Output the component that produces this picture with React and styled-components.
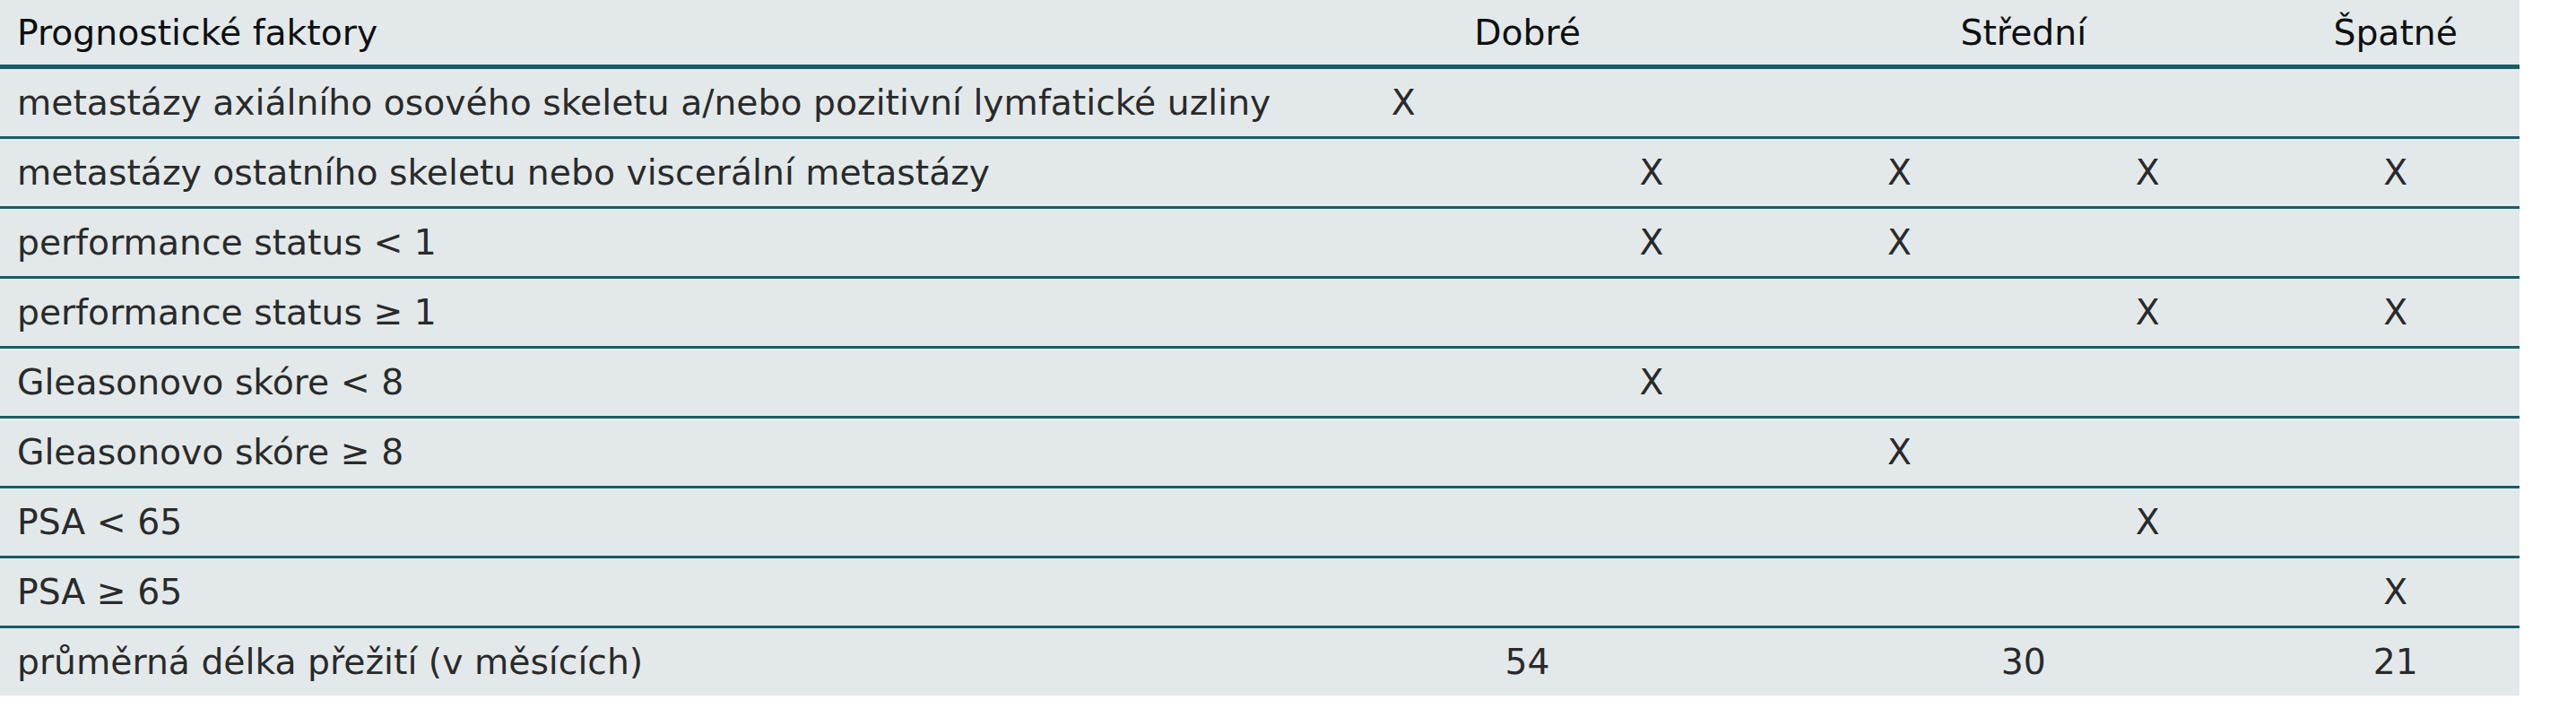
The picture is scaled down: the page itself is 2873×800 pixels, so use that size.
import React from 'react';
import styled, { createGlobalStyle } from 'styled-components';

const GlobalStyle = createGlobalStyle`
  body {
    margin: 0;
    background: #ffffff;
  }
`;

const Table = styled.div`
  width: 2810px;
  background: #e3e9eb;
  font-family: "DejaVu Sans", "Liberation Sans", sans-serif;
  font-size: 39.3px;
  color: #2a2a2a;
`;

const Row = styled.div`
  display: grid;
  grid-template-columns: 1427px repeat(5, 1fr);
  align-items: center;
  height: ${(p) => (p.head ? '72px' : '75px')};
  border-bottom: ${(p) => (p.last ? 'none' : p.head ? '5px solid #1b5b64' : '3px solid #1f5a62')};
  box-shadow: ${(p) => (p.head ? 'none' : 'inset 0 2px 0 #d2f1f5')};
`;

const Cell = styled.div`
  grid-column: span ${(p) => p.span || 1};
  text-align: ${(p) => (p.label ? 'left' : 'center')};
  padding-left: ${(p) => (p.label ? '19px' : '0')};
  white-space: nowrap;
  color: ${(p) => (p.head ? '#0f0f0f' : '#2a2a2a')};
`;

const rows = [
  ['metastázy axiálního osového skeletu a/nebo pozitivní lymfatické uzliny', [1, 0, 0, 0, 0]],
  ['metastázy ostatního skeletu nebo viscerální metastázy', [0, 1, 1, 1, 1]],
  ['performance status < 1', [0, 1, 1, 0, 0]],
  ['performance status ≥ 1', [0, 0, 0, 1, 1]],
  ['Gleasonovo skóre < 8', [0, 1, 0, 0, 0]],
  ['Gleasonovo skóre ≥ 8', [0, 0, 1, 0, 0]],
  ['PSA < 65', [0, 0, 0, 1, 0]],
  ['PSA ≥ 65', [0, 0, 0, 0, 1]],
];

export default function App() {
  return (
    <>
      <GlobalStyle />
      <Table>
        <Row head>
          <Cell label head>Prognostické faktory</Cell>
          <Cell head span={2}>Dobré</Cell>
          <Cell head span={2}>Střední</Cell>
          <Cell head>Špatné</Cell>
        </Row>
        {rows.map(([name, marks]) => (
          <Row key={name}>
            <Cell label>{name}</Cell>
            {marks.map((m, i) => (
              <Cell key={i}>{m ? 'X' : ''}</Cell>
            ))}
          </Row>
        ))}
        <Row last>
          <Cell label>průměrná délka přežití (v měsících)</Cell>
          <Cell span={2}>54</Cell>
          <Cell span={2}>30</Cell>
          <Cell>21</Cell>
        </Row>
      </Table>
    </>
  );
}
